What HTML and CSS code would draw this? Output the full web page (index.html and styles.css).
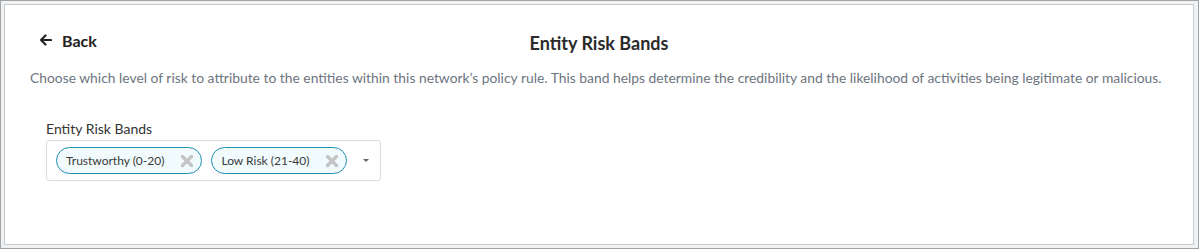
FILE: index.html
```html
<!DOCTYPE html>
<html>
<head>
<meta charset="utf-8">
<link rel="stylesheet" href="styles.css">
</head>
<body>
<div class="frame">
  <div class="panel">
    <div class="header">
      <a class="back">
        <svg width="13" height="12" viewBox="0 0 13 12"><path d="M12 6H2M6.5 1.5L2 6l4.5 4.5" fill="none" stroke="#222" stroke-width="2.2" stroke-linecap="round" stroke-linejoin="round"/></svg>
        <span>Back</span>
      </a>
      <h1 class="title">Entity Risk Bands</h1>
    </div>
    <p class="desc">Choose which level of risk to attribute to the entities within this network’s policy rule. This band helps determine the credibility and the likelihood of activities being legitimate or malicious.</p>
    <div class="field">
      <label class="label">Entity Risk Bands</label>
      <div class="select">
        <div class="chips">
          <span class="chip">Trustworthy (0-20)<svg class="x" width="14" height="14" viewBox="0 0 14 14"><path d="M2.5 2.5l9 9M11.5 2.5l-9 9" stroke="#c4c4c4" stroke-width="3.4" stroke-linecap="round"/></svg></span>
          <span class="chip">Low Risk (21-40)<svg class="x" width="14" height="14" viewBox="0 0 14 14"><path d="M2.5 2.5l9 9M11.5 2.5l-9 9" stroke="#c4c4c4" stroke-width="3.4" stroke-linecap="round"/></svg></span>
        </div>
        <span class="caret"></span>
      </div>
    </div>
  </div>
</div>
</body>
</html>
```
FILE: styles.css
```css
html, body { margin: 0; padding: 0; }
body {
  font-family: Lato, "Open Sans", sans-serif;
  width: 1199px;
  height: 249px;
  overflow: hidden;
}
.frame {
  box-sizing: border-box;
  width: 1199px;
  height: 249px;
  border: 1px solid #a3a3a3;
  background: #eef2f4;
  padding: 3px 4px 3px 3px;
}
.panel {
  box-sizing: border-box;
  height: 100%;
  background: #fff;
  border: 1px solid #c9c9c9;
  padding: 27px 25px 0 25px;
}
.header {
  position: relative;
  height: 22px;
  display: flex;
  align-items: center;
  justify-content: center;
}
.back {
  position: absolute;
  left: 9px;
  top: -3px;
  height: 22px;
  display: flex;
  align-items: center;
  gap: 10px;
  font-weight: 700;
  font-size: 16px;
  color: #222;
}
.title {
  margin: 0;
  font-size: 18px;
  line-height: 22px;
  font-weight: 700;
  color: #2b2b2b;
}
.desc {
  margin: 15px 0 0 0;
  font-size: 13.85px;
  line-height: 18px;
  color: #6d7580;
  white-space: nowrap;
}
.field {
  margin-top: 33px;
  padding-left: 16px;
}
.label {
  display: block;
  font-size: 14px;
  line-height: 18px;
  color: #333;
  margin-bottom: 2px;
}
.select {
  box-sizing: border-box;
  width: 335px;
  height: 41px;
  border: 1px solid #dcdcdc;
  border-radius: 3px;
  display: flex;
  align-items: center;
  padding: 0 11px 0 9px;
}
.chips {
  display: flex;
  gap: 9px;
  flex: 1;
}
.chip {
  box-sizing: border-box;
  height: 27px;
  display: inline-flex;
  align-items: center;
  gap: 16px;
  padding: 0 7px 0 9px;
  border: 1.5px solid #1e8eb3;
  border-radius: 14px;
  background: #f1fbfd;
  font-size: 12px;
  color: #3a3a3a;
}
.x { display: block; }
.caret {
  width: 0;
  height: 0;
  border-left: 3px solid transparent;
  border-right: 3px solid transparent;
  border-top: 3px solid #666;
}
```
